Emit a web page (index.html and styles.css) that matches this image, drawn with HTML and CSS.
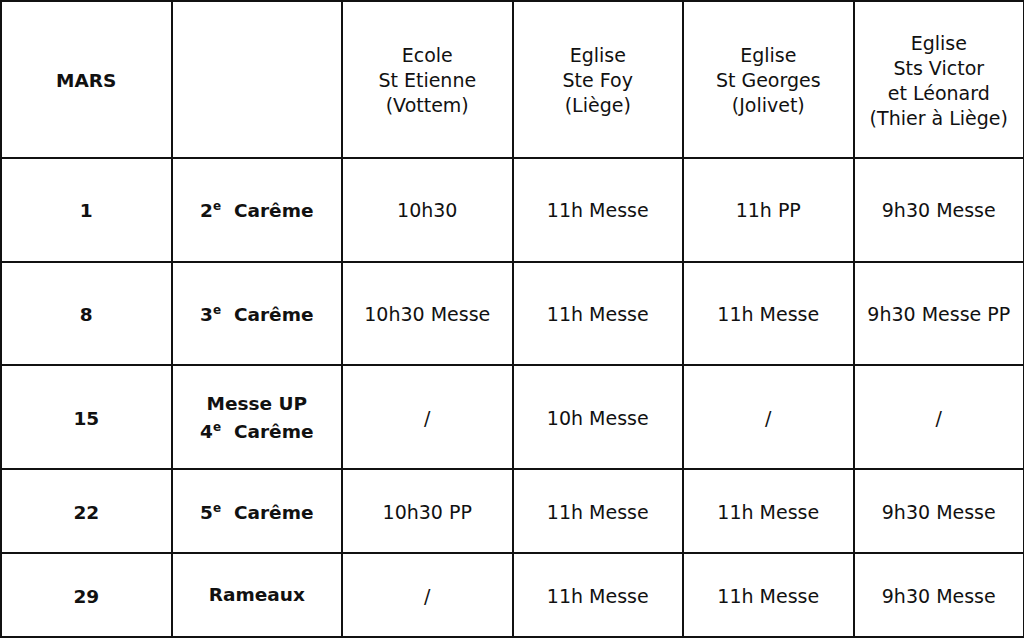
FILE: index.html
```html
<!DOCTYPE html>
<html lang="fr">
<head>
<meta charset="utf-8">
<title>Mars</title>
<link rel="stylesheet" href="styles.css">
</head>
<body>
<table class="schedule">
  <colgroup>
    <col class="c"><col class="c"><col class="c"><col class="c"><col class="c"><col class="c">
  </colgroup>
  <tr class="head">
    <td class="b">MARS</td>
    <td></td>
    <td>Ecole<br>St Etienne<br>(Vottem)</td>
    <td>Eglise<br>Ste Foy<br>(Liège)</td>
    <td>Eglise<br>St Georges<br>(Jolivet)</td>
    <td>Eglise<br>Sts Victor<br>et Léonard<br>(Thier à Liège)</td>
  </tr>
  <tr class="r1">
    <td class="b">1</td>
    <td class="b">2<sup>e</sup>&nbsp; Carême</td>
    <td>10h30</td>
    <td>11h Messe</td>
    <td>11h PP</td>
    <td>9h30 Messe</td>
  </tr>
  <tr class="r2">
    <td class="b">8</td>
    <td class="b">3<sup>e</sup>&nbsp; Carême</td>
    <td>10h30 Messe</td>
    <td>11h Messe</td>
    <td>11h Messe</td>
    <td>9h30 Messe PP</td>
  </tr>
  <tr class="r3">
    <td class="b">15</td>
    <td class="b two">Messe UP<br>4<sup>e</sup>&nbsp; Carême</td>
    <td>/</td>
    <td>10h Messe</td>
    <td>/</td>
    <td>/</td>
  </tr>
  <tr class="r4">
    <td class="b">22</td>
    <td class="b">5<sup>e</sup>&nbsp; Carême</td>
    <td>10h30 PP</td>
    <td>11h Messe</td>
    <td>11h Messe</td>
    <td>9h30 Messe</td>
  </tr>
  <tr class="r5">
    <td class="b">29</td>
    <td class="b up">Rameaux</td>
    <td>/</td>
    <td>11h Messe</td>
    <td>11h Messe</td>
    <td>9h30 Messe</td>
  </tr>
</table>
</body>
</html>
```
FILE: styles.css
```css
html, body {
  margin: 0;
  padding: 0;
  background: #fff;
}
.schedule {
  border-collapse: collapse;
  table-layout: fixed;
  width: 1024px;
  font-family: "DejaVu Sans", Verdana, sans-serif;
  font-size: 19px;
  line-height: 25px;
  color: #111;
}
.schedule .c {
  width: 170.5px;
}
.schedule td {
  border: 2px solid #111;
  text-align: center;
  vertical-align: middle;
  padding: 2px 0 0;
}
.schedule .b {
  font-weight: bold;
  font-size: 18.5px;
}
.schedule .two {
  line-height: 28px;
}
.schedule .up {
  padding-bottom: 4px;
}
.schedule sup {
  font-size: 12px;
  line-height: 0;
  vertical-align: 7px;
}
.head { height: 157px; }
.r1 { height: 103.5px; }
.r2 { height: 103.5px; }
.r3 { height: 104px; }
.r4 { height: 84px; }
.r5 { height: 84px; }
```
